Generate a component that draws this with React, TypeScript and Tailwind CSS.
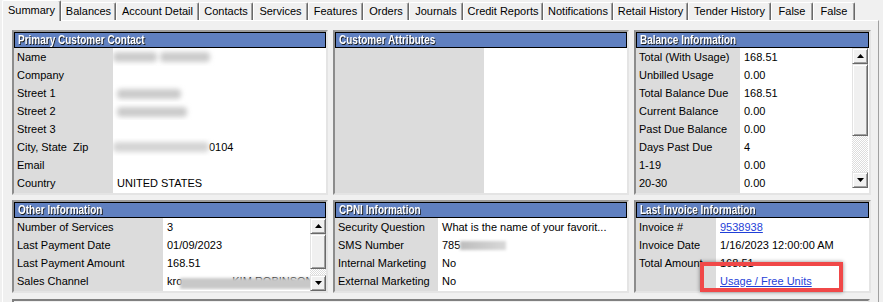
import * as React from "react";

type Row = { label: string; value?: React.ReactNode };

const tabs = [
  { label: "Summary", w: "w-[59px]", active: true },
  { label: "Balances", w: "w-[55px]" },
  { label: "Account Detail", w: "w-[83px]" },
  { label: "Contacts", w: "w-[54px]" },
  { label: "Services", w: "w-[55px]" },
  { label: "Features", w: "w-[55px]" },
  { label: "Orders", w: "w-[46px]" },
  { label: "Journals", w: "w-[54px]" },
  { label: "Credit Reports", w: "w-[80px]" },
  { label: "Notifications", w: "w-[70px]" },
  { label: "Retail History", w: "w-[75px]" },
  { label: "Tender History", w: "w-[83px]" },
  { label: "False", w: "w-[42px]" },
  { label: "False", w: "w-[42px]" },
];

// redacted value smudge
function Smudge({ className = "" }: { className?: string }) {
  return (
    <span
      className={`inline-block h-[10px] rounded-[4px] bg-[#cbcbcb] align-middle blur-[2.5px] ${className}`}
    />
  );
}

function Link({ children }: { children: React.ReactNode }) {
  return <span className="text-[#1f3fd8] underline">{children}</span>;
}

function ScrollButton({ dir }: { dir: "up" | "down" }) {
  return (
    <div className="flex h-[16px] w-[16px] shrink-0 items-center justify-center border border-t-[#e3e3e3] border-l-[#e3e3e3] border-r-[#696969] border-b-[#696969] bg-[#f0f0f0] shadow-[inset_1px_1px_0_#fff,inset_-1px_-1px_0_#a0a0a0]">
      <svg width="7" height="4" viewBox="0 0 7 4">
        <polygon
          points={dir === "up" ? "3.5,0 7,4 0,4" : "0,0 7,0 3.5,4"}
          fill="#000"
        />
      </svg>
    </div>
  );
}

function ScrollBar({ thumb, height }: { thumb: string; height: string }) {
  return (
    <div className={`flex w-[16px] shrink-0 flex-col ${height}`}>
      <ScrollButton dir="up" />
      <div
        className={`shrink-0 border border-t-[#e3e3e3] border-l-[#e3e3e3] border-r-[#696969] border-b-[#696969] bg-[#f0f0f0] shadow-[inset_1px_1px_0_#fff,inset_-1px_-1px_0_#a0a0a0] ${thumb}`}
      />
      <div className="flex-1 bg-[repeating-conic-gradient(#dcdcdc_0%_25%,#ffffff_0%_50%)] [background-size:2px_2px]" />
      <ScrollButton dir="down" />
    </div>
  );
}

function GroupBox({
  title,
  labelW,
  rows,
  scroll,
}: {
  title: string;
  labelW: string;
  rows: Row[];
  scroll?: React.ReactNode;
}) {
  return (
    <div className="flex min-h-0 flex-col border-2 border-t-[#9c9c9c] border-l-[#8c8c8c] border-r-[#e4e4e4] border-b-[#e4e4e4] bg-white">
      <div className="h-[16px] shrink-0 overflow-hidden border border-black bg-[#6080c0] pl-[3px] leading-[14px]">
        <span className="inline-block origin-left scale-x-[0.8] whitespace-nowrap text-[12.5px] font-bold text-white [text-shadow:1px_1px_0_#1a1a1a]">
          {title}
        </span>
      </div>
      <div className="flex min-h-0 flex-1">
        <div className={`shrink-0 bg-[#dcdcdc] ${labelW}`}>
          {rows.map((r, i) => (
            <div key={i} className="h-[18px] whitespace-pre pl-[3px] leading-[18px]">
              {r.label}
            </div>
          ))}
        </div>
        <div className="min-w-0 flex-1">
          {rows.map((r, i) => (
            <div
              key={i}
              className="relative h-[18px] overflow-hidden whitespace-nowrap pl-[4px] leading-[18px]"
            >
              {r.value}
            </div>
          ))}
        </div>
        {scroll}
      </div>
    </div>
  );
}

export default function App() {
  const primary: Row[] = [
    {
      label: "Name",
      value: (
        <span className="-ml-[4px] flex h-full items-center gap-[3px]">
          <Smudge className="w-[44px]" />
          <Smudge className="w-[50px]" />
        </span>
      ),
    },
    { label: "Company" },
    { label: "Street 1", value: <Smudge className="w-[64px]" /> },
    { label: "Street 2", value: <Smudge className="w-[70px]" /> },
    { label: "Street 3" },
    {
      label: "City, State  Zip",
      value: (
        <span className="-ml-[4px] flex h-full items-center">
          <Smudge className="w-[96px] bg-[#d4d4d4]" />
          <span>0104</span>
        </span>
      ),
    },
    { label: "Email" },
    { label: "Country", value: "UNITED STATES" },
  ];

  const other: Row[] = [
    { label: "Number of Services", value: "3" },
    { label: "Last Payment Date", value: "01/09/2023" },
    { label: "Last Payment Amount", value: "168.51" },
    {
      label: "Sales Channel",
      value: (
        <>
          <span>kro</span>
          <span className="pl-[50px]">KIM ROBINSON</span>
          <span className="absolute top-[6px] left-[17px] h-[11px] w-[140px] bg-[#c8c8c8] blur-[1.5px]" />
        </>
      ),
    },
  ];

  const cpni: Row[] = [
    { label: "Security Question", value: "What is the name of your favorit..." },
    {
      label: "SMS Number",
      value: (
        <span className="flex h-full items-center">
          <span>785</span>
          <span className="inline-block h-[9px] w-[46px] bg-gradient-to-r from-[#bdbdbd] to-[#d8d8d8] blur-[1.5px]" />
        </span>
      ),
    },
    { label: "Internal Marketing", value: "No" },
    { label: "External Marketing", value: "No" },
  ];

  const balance: Row[] = [
    { label: "Total (With Usage)", value: "168.51" },
    { label: "Unbilled Usage", value: "0.00" },
    { label: "Total Balance Due", value: "168.51" },
    { label: "Current Balance", value: "0.00" },
    { label: "Past Due Balance", value: "0.00" },
    { label: "Days Past Due", value: "4" },
    { label: "1-19", value: "0.00" },
    { label: "20-30", value: "0.00" },
  ];

  const invoice: Row[] = [
    { label: "Invoice #", value: <Link>9538938</Link> },
    { label: "Invoice Date", value: "1/16/2023 12:00:00 AM" },
    { label: "Total Amount", value: "168.51" },
    { label: "", value: <Link>Usage / Free Units</Link> },
  ];

  return (
    <div className="relative h-[302px] w-[883px] overflow-hidden bg-[#f0f0f0] font-['Liberation_Sans',Arial,sans-serif] text-[11px] text-black">
      {/* tab strip */}
      <div className="flex h-[20px] items-end pl-[2px]">
        {tabs.map((t, i) =>
          t.active ? (
            <div
              key={i}
              className={`relative z-10 -mb-[1px] flex h-[21px] shrink-0 items-center justify-center rounded-t-[2px] border-t border-l border-r border-t-white border-l-white border-r-[#696969] bg-[#f0f0f0] pb-[2px] shadow-[inset_-1px_0_0_#a0a0a0] ${t.w}`}
            >
              {t.label}
            </div>
          ) : (
            <div
              key={i}
              className={`flex h-[18px] shrink-0 items-center justify-center rounded-t-[2px] border-t border-l border-r border-t-white border-l-white border-r-[#696969] bg-[#f0f0f0] shadow-[inset_-1px_0_0_#a0a0a0] ${t.w}`}
            >
              {t.label}
            </div>
          )
        )}
      </div>

      {/* tab page */}
      <div className="ml-[2px] h-[282px] w-[877px] border-t border-l border-r border-t-white border-l-white border-r-[#a0a0a0] pt-[9px] pl-[9px]">
        <div className="grid grid-cols-[316px_296px_237px] grid-rows-[165px_93px] gap-x-[5px] gap-y-[5px]">
          <GroupBox title="Primary Customer Contact" labelW="w-[99px]" rows={primary} />
          <GroupBox title="Customer Attributes" labelW="w-[149px]" rows={[]} />
          <GroupBox
            title="Balance Information"
            labelW="w-[104px]"
            rows={balance}
            scroll={
              <div className="flex flex-col pr-[1px]">
                <ScrollBar thumb="h-[72px]" height="h-[140px]" />
              </div>
            }
          />
          <GroupBox
            title="Other Information"
            labelW="w-[149px]"
            rows={other}
            scroll={<ScrollBar thumb="h-[35px]" height="h-full" />}
          />
          <GroupBox title="CPNI Information" labelW="w-[103px]" rows={cpni} />
          <GroupBox title="Last Invoice Information" labelW="w-[80px]" rows={invoice} />
        </div>
        <div className="mt-[6px] h-[10px] w-[858px] border-t-2 border-l-2 border-r-2 border-t-[#808080] border-l-[#808080] border-r-[#e4e4e4]" />
      </div>

      {/* annotation highlight */}
      <div className="absolute top-[262px] left-[700px] h-[30px] w-[143px] border-[4px] border-[#f04848] shadow-[0_0_4px_rgba(0,0,0,0.45)]" />
    </div>
  );
}
